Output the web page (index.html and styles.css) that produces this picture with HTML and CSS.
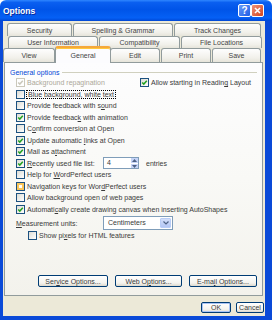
FILE: index.html
```html
<!DOCTYPE html>
<html lang="en">
<head>
  <meta charset="UTF-8">
  <title>Options</title>
  <link rel="stylesheet" href="styles.css">
</head>
<body>
  <div class="window">
    <div class="titlebar">
      <span class="title">Options</span>
      <span class="tb-btn help">?</span>
      <span class="tb-btn close">
        <svg width="7" height="7" viewBox="0 0 7 7"><path d="M1 1L6 6M6 1L1 6" stroke="#fff" stroke-width="1.6" fill="none"/></svg>
      </span>
    </div>

    <div class="client">
      <div class="tabs">
        <div class="tab-row row1">
          <div class="tab security">Security</div>
          <div class="tab spelling">Spelling &amp; Grammar</div>
          <div class="tab track">Track Changes</div>
        </div>
        <div class="tab-row row2">
          <div class="tab userinfo">User Information</div>
          <div class="tab compat">Compatibility</div>
          <div class="tab fileloc">File Locations</div>
        </div>
        <div class="tab-row row3">
          <div class="tab view">View</div>
          <div class="tab general active">General</div>
          <div class="tab edit">Edit</div>
          <div class="tab print">Print</div>
          <div class="tab save">Save</div>
        </div>
      </div>

      <div class="panel">
        <div class="group-title"><span>General options</span><i class="group-line"></i></div>

        <div class="opt-row">
          <label class="check col-left disabled"><span class="cb"><svg viewBox="0 0 7 7"><path d="M1.2 3.4L2.8 5.1L5.8 1.8"/></svg></span><span>Background repagination</span></label>
          <label class="check"><span class="cb"><svg viewBox="0 0 7 7"><path d="M1.2 3.4L2.8 5.1L5.8 1.8"/></svg></span><span>Allow starting in Readin<u>g</u> Layout</span></label>
        </div>
        <div class="opt-row">
          <label class="check"><span class="cb"></span><span class="focus">B<u>l</u>ue background, white text</span></label>
        </div>
        <div class="opt-row">
          <label class="check"><span class="cb"></span><span>Provide feedback with s<u>o</u>und</span></label>
        </div>
        <div class="opt-row">
          <label class="check"><span class="cb"><svg viewBox="0 0 7 7"><path d="M1.2 3.4L2.8 5.1L5.8 1.8"/></svg></span><span>Provide feedbac<u>k</u> with animation</span></label>
        </div>
        <div class="opt-row">
          <label class="check"><span class="cb"></span><span>C<u>o</u>nfirm conversion at Open</span></label>
        </div>
        <div class="opt-row">
          <label class="check"><span class="cb"><svg viewBox="0 0 7 7"><path d="M1.2 3.4L2.8 5.1L5.8 1.8"/></svg></span><span>Update automatic <u>l</u>inks at Open</span></label>
        </div>
        <div class="opt-row">
          <label class="check"><span class="cb"><svg viewBox="0 0 7 7"><path d="M1.2 3.4L2.8 5.1L5.8 1.8"/></svg></span><span>Mail as a<u>t</u>tachment</span></label>
        </div>
        <div class="opt-row">
          <label class="check file-list"><span class="cb"><svg viewBox="0 0 7 7"><path d="M1.2 3.4L2.8 5.1L5.8 1.8"/></svg></span><span><u>R</u>ecently used file list:</span></label>
          <div class="spin">
            <span class="spin-value">4</span>
            <span class="spin-btns">
              <span class="spin-btn"><svg width="5" height="3" viewBox="0 0 5 3"><path d="M0 3L2.5 0L5 3Z" fill="#4d6185"/></svg></span>
              <span class="spin-btn"><svg width="5" height="3" viewBox="0 0 5 3"><path d="M0 0L2.5 3L5 0Z" fill="#4d6185"/></svg></span>
            </span>
          </div>
          <span class="entries">entries</span>
        </div>
        <div class="opt-row">
          <label class="check"><span class="cb"></span><span>Help for <u>W</u>ordPerfect users</span></label>
        </div>
        <div class="opt-row">
          <label class="check"><span class="cb hover"></span><span>Navigation keys for Wor<u>d</u>Perfect users</span></label>
        </div>
        <div class="opt-row">
          <label class="check"><span class="cb"></span><span>Allow background open of web pages</span></label>
        </div>
        <div class="opt-row">
          <label class="check"><span class="cb"><svg viewBox="0 0 7 7"><path d="M1.2 3.4L2.8 5.1L5.8 1.8"/></svg></span><span>Automati<u>c</u>ally create drawing canvas when inserting AutoShapes</span></label>
        </div>
        <div class="opt-row units-row">
          <span class="units-label"><u>M</u>easurement units:</span>
          <div class="select">
            <span class="select-value">Centimeters</span>
            <span class="select-btn"><svg width="6" height="4" viewBox="0 0 6 4"><path d="M0.5 0.5L3 3L5.5 0.5" stroke="#4d6185" stroke-width="1.2" fill="none"/></svg></span>
          </div>
        </div>
        <div class="opt-row sub-row">
          <label class="check"><span class="cb"></span><span>Show pi<u>x</u>els for HTML features</span></label>
        </div>

        <div class="panel-buttons">
          <span class="btn service"><span>Ser<u>v</u>ice Options...</span></span>
          <span class="btn web"><span>Web O<u>p</u>tions...</span></span>
          <span class="btn email"><span>E-ma<u>i</u>l Options...</span></span>
        </div>
      </div>

      <div class="dialog-buttons">
        <span class="btn ok default">OK</span>
        <span class="btn cancel">Cancel</span>
      </div>
    </div>
  </div>
</body>
</html>
```

FILE: styles.css
```css
body {
  margin: 0;
  font-family: "Liberation Sans", Arial, sans-serif;
  font-size: 7px;
  color: #3a3a3a;
  background: #fff;
}
u {
  text-decoration-thickness: 1px;
  text-underline-offset: 1px;
}
.window {
  width: 272px;
  height: 320px;
  display: flex;
  flex-direction: column;
}

/* title bar */
.titlebar {
  height: 21px;
  flex-shrink: 0;
  display: flex;
  align-items: center;
  padding: 0 8px 0 3px;
  box-sizing: border-box;
  border-radius: 6px 6px 0 0;
  background: linear-gradient(#2f86ff 0%, #0a5ff0 12%, #0054e8 45%, #0560f5 85%, #0047d4 100%);
}
.title {
  flex: 1;
  color: #fff;
  font-weight: bold;
  font-size: 8.5px;
  text-shadow: 1px 1px #0b2a9a;
}
.tb-btn {
  width: 13px;
  height: 13px;
  box-sizing: border-box;
  border: 1px solid #fff;
  border-radius: 2px;
  display: flex;
  align-items: center;
  justify-content: center;
}
.help {
  background: linear-gradient(135deg, #6a9cf8, #1d5de6);
  color: #fff;
  font-weight: bold;
  font-size: 10px;
}
.close {
  background: linear-gradient(135deg, #f0937a, #d4441c);
}

/* client area */
.client {
  flex: 1;
  display: flex;
  flex-direction: column;
  padding-top: 2px;
  background: #ece9d8;
  border-left: 3px solid #0a4ad8;
  border-right: 7px solid #0a4ad8;
  border-bottom: 4px solid #0a4ad8;
}

/* tabs */
.tabs {
  display: flex;
  flex-direction: column;
}
.tab-row {
  display: flex;
  gap: 1px;
}
.row1 {
  height: 13px;
  margin-left: 4px;
}
.row2 {
  height: 12px;
  margin-left: 5px;
}
.row3 {
  height: 14px;
  align-items: flex-end;
}
.tab {
  box-sizing: border-box;
  height: 100%;
  border: 1px solid #919b9c;
  border-bottom: none;
  border-radius: 3px 3px 0 0;
  background: linear-gradient(#fefefe, #f1f0ea 70%, #e6e4da);
  display: flex;
  align-items: center;
  justify-content: center;
  color: #444;
}
.security { width: 65px; }
.spelling { width: 100px; }
.track { width: 87px; }
.userinfo { width: 90px; }
.compat { width: 81px; }
.fileloc { width: 81px; }
.view { width: 52px; }
.general { width: 53px; }
.edit { width: 50px; }
.print { width: 50px; }
.save { width: 49px; }
.tab.active {
  height: 17px;
  width: 56px;
  margin: 0 -2px -1px -1px;
  position: relative;
  z-index: 1;
  background: #fcfcfe;
  border-top: 2px solid #f5a83a;
  box-shadow: inset 0 1px #ffc83c;
  padding-bottom: 1px;
}

/* panel */
.panel {
  height: 234px;
  flex-shrink: 0;
  box-sizing: border-box;
  margin: 0 2px 0 1px;
  border: 1px solid #919b9c;
  background: linear-gradient(#fdfdfe, #f9f9f6 50%, #f3f2ec);
  display: flex;
  flex-direction: column;
  padding: 4px 5px 8px 0;
}
.group-title {
  height: 10px;
  display: flex;
  align-items: center;
  padding-left: 5px;
  color: #0046d5;
}
.group-line {
  flex: 1;
  margin-left: 3px;
  border-top: 1px solid #d0d0bf;
}
.opt-row {
  height: 11.5px;
  display: flex;
  align-items: center;
  padding-left: 11px;
  white-space: nowrap;
}
.check {
  display: flex;
  align-items: center;
}
.col-left {
  width: 124px;
}
.cb {
  width: 9px;
  height: 9px;
  flex-shrink: 0;
  box-sizing: border-box;
  margin-right: 2px;
  border: 1px solid #1c5180;
  background: linear-gradient(135deg, #dcdcd5, #fff);
  display: flex;
}
.cb svg {
  width: 7px;
  height: 7px;
  fill: none;
  stroke: #21a121;
  stroke-width: 1.5;
}
.cb.hover {
  background: #fff;
  box-shadow: inset 0 0 0 2px #fac65a;
}
.disabled {
  color: #aca899;
}
.disabled .cb {
  border-color: #cac8bb;
  background: #fff;
}
.disabled .cb svg {
  stroke: #cac8bb;
}
.focus {
  outline: 1px dotted #000;
  outline-offset: 0;
  padding: 0 1px;
}

/* spinner */
.file-list {
  width: 87px;
}
.spin {
  width: 36px;
  height: 12px;
  box-sizing: border-box;
  border: 1px solid #7f9db9;
  background: #fff;
  display: flex;
}
.spin-value {
  flex: 1;
  padding-left: 3px;
  line-height: 10px;
}
.spin-btns {
  width: 7px;
  display: flex;
  flex-direction: column;
  gap: 1px;
}
.spin-btn {
  flex: 1;
  background: #c6d5f8;
  display: flex;
  align-items: center;
  justify-content: center;
}
.entries {
  margin-left: 7px;
}

/* measurement units */
.units-row {
  height: 14px;
  margin-top: 1px;
}
.units-label {
  width: 87px;
}
.select {
  width: 70px;
  height: 14px;
  box-sizing: border-box;
  border: 1px solid #7f9db9;
  background: #fff;
  display: flex;
  padding: 1px;
}
.select-value {
  flex: 1;
  padding-left: 3px;
  line-height: 10px;
}
.select-btn {
  width: 9px;
  border: 1px solid #b9cdf6;
  border-radius: 1px;
  background: linear-gradient(#d3def9, #b3c6f4);
  display: flex;
  align-items: center;
  justify-content: center;
}
.sub-row {
  padding-left: 23px;
}

/* buttons */
.btn {
  box-sizing: border-box;
  height: 12px;
  border: 1px solid #003c74;
  border-radius: 2px;
  background: linear-gradient(#fff, #f4f3ee 70%, #dcd8cd);
  display: flex;
  align-items: center;
  justify-content: center;
  color: #3a3a3a;
}
.panel-buttons {
  margin-top: auto;
  display: flex;
  justify-content: flex-end;
  gap: 7px;
}
.service { width: 70px; }
.web { width: 67px; }
.email { width: 68px; }
.dialog-buttons {
  margin-top: 6px;
  padding-right: 1px;
  display: flex;
  justify-content: flex-end;
  gap: 5px;
}
.ok {
  width: 30px;
  height: 11px;
}
.cancel {
  width: 28px;
  height: 11px;
}
.default {
  box-shadow: inset 0 0 0 1px #a9c4f5;
}
```
